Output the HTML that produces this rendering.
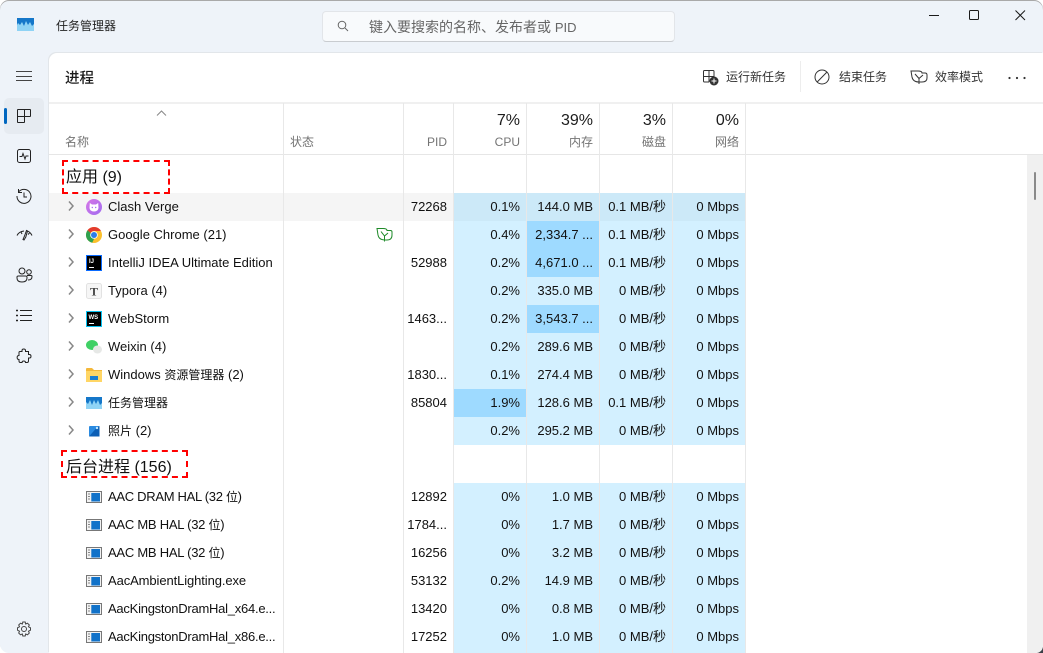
<!DOCTYPE html>
<html lang="zh-CN"><head><meta charset="utf-8"><title>任务管理器</title>
<style>
html,body{margin:0;padding:0;width:1043px;height:653px;overflow:hidden;background:#fff}
body{position:relative;font-family:"Liberation Sans","Noto Sans CJK SC",sans-serif;font-size:13px;color:#111}
div,span,svg{position:absolute;display:block}
i{font-style:normal;font-size:12px}
.t{white-space:nowrap;line-height:18px;height:18px}
.win{left:0;top:0;width:1043px;height:653px;background:#eef3f9;border-radius:9px 9px 0 9px;overflow:hidden;box-shadow:inset 0 1px 0 #a9a9a9}
.panel{left:49px;top:53px;width:994px;height:600px;background:#fff;border-radius:8px 0 0 0;box-shadow:-1px -1px 0 #e2e6ea}
.h{left:0;height:1px}
.v{width:1px;top:103px;height:550px;background:#e8e8e8}
.hp{font-size:16px;color:#1c1c1c;text-align:right;width:60px;line-height:20px;height:20px;top:111px}
.hl{font-size:12px;color:#747474;text-align:right;width:60px;top:133px}
.heat{background:#d3f0ff;width:73px}
.dark{background:#9edaff;width:73px}
.n{left:108px;margin-top:1px}
.pid{left:390px;width:57px;text-align:right;margin-top:1px}
.c1{left:460px;width:60px;text-align:right;margin-top:1px}
.c2{left:530px;width:63px;text-align:right;margin-top:1px}
.c3{left:603px;width:63px;text-align:right;margin-top:1px}
.c4{left:676px;width:63px;text-align:right;margin-top:1px}
.ic{left:86px;width:16px;height:16px}
.tb{font-size:12px;color:#333;top:68px}
.box{border:2px dashed #f00;box-sizing:border-box}
.g{font-size:16px;color:#111;line-height:22px;height:22px;white-space:nowrap}
</style></head>
<body>
<div class="win">
<div class="panel"></div>

<!-- title bar -->
<svg style="left:17px;top:18px" width="17" height="13" viewBox="0 0 17 13"><rect width="17" height="13" fill="#8fd3f5"/><path d="M0 0H17V6L15 8 13 4 11 7 9 3 7 8 5 4 3 7 1 5 0 7Z" fill="#1577c9"/></svg>
<div class="t" style="left:56px;top:17px;font-size:12px;color:#222">任务管理器</div>
<div style="left:322px;top:11px;width:351px;height:29px;background:#f8fafc;border:1px solid #e2e5e9;border-bottom-color:#c9ccd0;border-radius:4px"></div>
<svg style="left:337px;top:20px" width="12" height="12" viewBox="0 0 12 12" fill="none" stroke="#666" stroke-width="1"><circle cx="5" cy="5" r="3.8"/><path d="M8 8L11 11"/></svg>
<div class="t" style="left:369px;top:18px;color:#666;font-size:14px">键入要搜索的名称、发布者或 <i style="font-size:13px">PID</i></div>
<svg style="left:925px;top:6px" width="104" height="18" viewBox="0 0 104 18" fill="none" stroke="#1a1a1a" stroke-width="1"><path d="M4 9.500H14"/><rect x="44.500" y="4.500" width="9" height="9" rx="1"/><path d="M90.500 4.500L100 14M100 4.500L90.500 14"/></svg>

<!-- toolbar -->
<div class="t" style="left:65px;top:70px;font-size:14.500px;font-weight:500;color:#1a1a1a">进程</div>
<svg style="left:702px;top:69px" width="17" height="17" viewBox="0 0 17 17" fill="none" stroke="#333" stroke-width="1"><path d="M7 1.500H2.500Q1.500 1.500 1.500 2.500V12Q1.500 13 2.500 13H7M1.500 7.500H12V2.500Q12 1.500 11 1.500H7V13"/><circle cx="12" cy="12" r="4.500" fill="#333" stroke="none"/><path d="M12 9.500V14.500M9.500 12H14.500" stroke="#fff"/></svg>
<div class="t tb" style="left:726px">运行新任务</div>
<div style="left:800px;top:61px;width:1px;height:31px;background:#ededed"></div>
<svg style="left:814px;top:69px" width="16" height="16" viewBox="0 0 16 16" fill="none" stroke="#333" stroke-width="1"><circle cx="8" cy="8" r="7"/><path d="M3.200 13L13 3"/></svg>
<div class="t tb" style="left:839px">结束任务</div>
<svg style="left:910px;top:69px" width="18" height="16" viewBox="0 0 18 16" fill="none" stroke="#333" stroke-width="1"><path d="M1 2H8Q12 2 12 4H15Q17 4 17 6V9Q17 13 12 13H9Q3 13 2 8ZM5 5L9 9.500V15M9 9.500L13 6"/></svg>
<div class="t tb" style="left:935px">效率模式</div>
<svg style="left:1008px;top:76px" width="18" height="4" viewBox="0 0 18 4" fill="#333"><circle cx="1.500" cy="2" r="1.100"/><circle cx="9" cy="2" r="1.100"/><circle cx="16.500" cy="2" r="1.100"/></svg>

<!-- sidebar -->
<svg style="left:16px;top:70px" width="16" height="12" viewBox="0 0 16 12" stroke="#444" stroke-width="1" fill="none"><path d="M0 1.500H16M0 6.500H16M0 10.500H16"/></svg>
<div style="left:4px;top:98px;width:40px;height:36px;background:#e6ebf1;border-radius:5px"></div>
<div style="left:4px;top:108px;width:3px;height:16px;background:#0067c0;border-radius:2px"></div>
<svg style="left:16px;top:108px" width="16" height="16" viewBox="0 0 16 16" fill="none" stroke="#222" stroke-width="1"><path d="M8.500 8.500V1.500H14Q14.500 1.500 14.500 2V8Q14.500 8.500 14 8.500H1.500M8.500 1.500H2Q1.500 1.500 1.500 2V14Q1.500 14.500 2 14.500H8Q8.500 14.500 8.500 14V8.500"/></svg>
<svg style="left:16px;top:148px" width="16" height="16" viewBox="0 0 16 16" fill="none" stroke="#222" stroke-width="1"><rect x="1.500" y="1.500" width="13" height="13" rx="2"/><path d="M3.500 8.500H6L7 5.500 9 11 10 8H12.500"/></svg>
<svg style="left:16px;top:188px" width="16" height="16" viewBox="0 0 16 16" fill="none" stroke="#222" stroke-width="1"><path d="M2.500 4A7 7 0 1 1 1 8M2.500 1V4.500H6M8 4.500V9H11"/></svg>
<svg style="left:16px;top:227px" width="17" height="16" viewBox="0 0 17 16" fill="none" stroke="#222" stroke-width="1"><path d="M1 8.500Q3 4.500 8 4M11 4Q14 4.500 16 8.500M5 5L6 7M13.500 6L12 7.500"/><path d="M10.500 3.500L8.500 9 7 12.500 8 13 9.800 10 11.500 4Z"/></svg>
<svg style="left:16px;top:267px" width="17" height="16" viewBox="0 0 17 16" fill="none" stroke="#222" stroke-width="1"><circle cx="6" cy="4" r="3"/><circle cx="13" cy="5" r="2.300"/><path d="M1 10Q1 9 2.500 9H9.500Q11 9 11 10V11Q11 15 6 15 1 15 1 11ZM11 8.500H15Q16 8.500 16 9.500 16 13 12 13"/></svg>
<svg style="left:16px;top:308px" width="16" height="14" viewBox="0 0 16 14" fill="none" stroke="#222" stroke-width="1"><path d="M4 2.500H16M4 7.500H16M4 12.500H16"/><path d="M0 2.500H2M0 7.500H2M0 12.500H2" stroke-width="1.500"/></svg>
<svg style="left:16px;top:348px" width="16" height="16" viewBox="0 0 16 16" fill="none" stroke="#222" stroke-width="1"><path d="M6 2.500C6 .5 9.500 .5 9.500 2.500V3.500H12.500V6.500H13.500C15.500 6.500 15.500 10 13.500 10H12.500V13Q12.500 14.500 11 14.500H9.500C9.500 12.500 6 12.500 6 14.500H4.500Q3 14.500 3 13V11.500C.5 11.500 .5 7.500 3 7.500V4.500Q3 3.500 4 3.500H6Z"/></svg>
<svg style="left:16px;top:621px" width="16" height="16" viewBox="0 0 16 16" fill="none" stroke="#444" stroke-width="1"><circle cx="8" cy="8" r="2.500"/><path d="M6.800 1H9.200L9.700 3 11.500 2.200 13.300 4 12.500 5.800 14.500 6.800V9.200L12.500 10.200 13.300 12 11.500 13.800 9.700 13 9.200 15H6.800L6.300 13 4.500 13.800 2.700 12 3.500 10.200 1.500 9.200V6.800L3.500 5.800 2.700 4 4.500 2.200 6.300 3Z"/></svg>

<!-- table rules -->
<div class="h" style="left:49px;top:102px;width:994px;height:2px;background:#f0f0f0"></div>
<div class="h" style="left:49px;top:154px;width:994px;background:#e6e6e6"></div>
<div style="left:1027px;top:155px;width:16px;height:498px;background:#f0f0f0"></div>
<div style="left:1034px;top:172px;width:2px;height:28px;background:#8a8a8a;border-radius:1px"></div>
<svg style="left:1037px;top:647px" width="6" height="6" viewBox="0 0 6 6"><path d="M6 0V6H0Q5 5 6 0Z" fill="#3a3f46"/></svg>

<!-- heat backgrounds -->
<div style="left:49px;top:193px;width:404px;height:28px;background:#f5f5f5"></div>
<div class="heat" style="left:454px;top:193px;width:292px;height:252px"></div>
<div class="heat" style="left:454px;top:483px;width:292px;height:170px"></div>
<div style="left:454px;top:193px;width:292px;height:28px;background:#cce9f8"></div>
<div class="dark" style="left:527px;top:221px;height:56px"></div>
<div class="dark" style="left:527px;top:305px;height:28px"></div>
<div class="dark" style="left:454px;top:389px;height:28px"></div>

<div style="left:454px;top:155px;width:292px;height:38px;background:#fff"></div>
<div style="left:454px;top:445px;width:292px;height:38px;background:#fff"></div>
<div class="v" style="left:283px"></div><div class="v" style="left:403px"></div><div class="v" style="left:453px"></div><div class="v" style="left:526px"></div><div class="v" style="left:599px"></div><div class="v" style="left:672px"></div><div class="v" style="left:745px"></div>

<!-- header -->
<svg style="left:156px;top:110px" width="11" height="6" viewBox="0 0 11 6" fill="none" stroke="#888" stroke-width="1"><path d="M1 5.500L5.500 1 10 5.500"/></svg>
<div class="t" style="left:65px;top:133px;font-size:12px;color:#747474">名称</div>
<div class="t" style="left:290px;top:133px;font-size:12px;color:#747474">状态</div>
<div class="t hl" style="left:387px">PID</div>
<div class="t hp" style="left:460px">7%</div><div class="t hl" style="left:460px">CPU</div>
<div class="t hp" style="left:533px">39%</div><div class="t hl" style="left:533px">内存</div>
<div class="t hp" style="left:606px">3%</div><div class="t hl" style="left:606px">磁盘</div>
<div class="t hp" style="left:679px">0%</div><div class="t hl" style="left:679px">网络</div>

<!-- groups -->
<div class="box" style="left:62px;top:160px;width:108px;height:34px"></div>
<div class="g" style="left:66px;top:167px">应用 (9)</div>
<div class="box" style="left:61px;top:450px;width:127px;height:28px"></div>
<div class="g" style="left:66px;top:457px">后台进程 (156)</div>

<!-- chevrons -->
<svg style="left:68px;top:201px" width="6" height="240" viewBox="0 0 6 240" fill="none" stroke="#888" stroke-width="1.500"><path d="M1 0.500L5 5 1 9.500M1 28.500L5 33 1 37.500M1 56.500L5 61 1 65.500M1 84.500L5 89 1 93.500M1 112.500L5 117 1 121.500M1 140.500L5 145 1 149.500M1 168.500L5 173 1 177.500M1 196.500L5 201 1 205.500M1 224.500L5 229 1 233.500"/></svg>

<!-- app icons -->
<svg class="ic" style="top:199px" viewBox="0 0 16 16"><defs><linearGradient id="cv" x1="0" y1="0" x2="1" y2="1"><stop offset="0" stop-color="#d877e6"/><stop offset="1" stop-color="#a06cf0"/></linearGradient></defs><circle cx="8" cy="8" r="8" fill="url(#cv)"/><path d="M3.800 4L6 5.500H10L12.200 4 12.500 9Q12 12.500 8 12.500 4 12.500 3.500 9Z" fill="#fff"/><circle cx="6.300" cy="8.500" r=".7" fill="#a06cf0"/><circle cx="9.700" cy="8.500" r=".7" fill="#a06cf0"/></svg>
<svg class="ic" style="top:227px" viewBox="0 0 16 16"><circle cx="8" cy="8" r="8" fill="#fbc02d"/><path d="M8 0A8 8 0 0 1 15 4H8A4 4 0 0 0 4.500 6L1.500 3.300A8 8 0 0 1 8 0Z" fill="#e33b2e"/><path d="M1.500 3.300L4.500 6 8 12 6.200 15.800A8 8 0 0 1 1.500 3.300Z" fill="#2fa14f"/><circle cx="8" cy="8" r="3.800" fill="#fff"/><circle cx="8" cy="8" r="3" fill="#2a7de9"/></svg>
<svg class="ic" style="top:255px" viewBox="0 0 16 16"><rect width="16" height="16" fill="#0a6bff"/><rect x="1" y="1" width="14" height="14" fill="#000"/><path d="M3 12.500H8" stroke="#fff" stroke-width="1"/><text x="3" y="8" font-size="6" font-family="Liberation Sans" font-weight="700" fill="#fff">IJ</text></svg>
<svg class="ic" style="top:283px" viewBox="0 0 16 16"><rect x=".5" y=".5" width="15" height="15" rx="2" fill="#f6f6f6" stroke="#e2e2e2"/><text x="8" y="12.500" text-anchor="middle" font-size="12" font-weight="700" font-family="Liberation Serif" fill="#444">T</text></svg>
<svg class="ic" style="top:311px" viewBox="0 0 16 16"><rect width="16" height="16" fill="#07c3f2"/><rect x="1" y="1" width="14" height="14" fill="#000"/><path d="M3 12.500H8" stroke="#fff" stroke-width="1"/><text x="2.500" y="8" font-size="6" font-family="Liberation Sans" font-weight="700" fill="#fff">WS</text></svg>
<svg class="ic" style="top:339px" viewBox="0 0 16 16"><ellipse cx="6" cy="6" rx="6" ry="5" fill="#3fd065"/><ellipse cx="11.500" cy="10.500" rx="4.500" ry="4" fill="#e6e8e6"/></svg>
<svg class="ic" style="top:367px" viewBox="0 0 16 16"><path d="M0 2Q0 1 1 1H6L8 3H16V15H0Z" fill="#f4b83a"/><rect y="4" width="16" height="11" fill="#ffd665"/><rect x="4" y="9" width="8" height="4" fill="#1b7fd1"/></svg>
<svg class="ic" style="top:397px;height:12px" viewBox="0 0 16 12" preserveAspectRatio="none"><rect width="16" height="12" fill="#8fd3f5"/><path d="M0 0H16V6L14 8 12 3 10 7 8 3 6 8 4 3 2 7 0 5Z" fill="#1577c9"/></svg>
<svg class="ic" style="top:423px" viewBox="0 0 16 16"><rect x="3" y="3" width="10.500" height="10.500" rx="1" fill="#2a8ae0"/><path d="M3 13.500L10 5.500 13.500 3V13.500Z" fill="#0d5fb5"/><circle cx="11" cy="5" r="1.200" fill="#bfe8ff"/></svg>
<svg style="left:376px;top:227px" width="17" height="15" viewBox="0 0 17 15" fill="none" stroke="#1e8a28" stroke-width="1"><path d="M1 1.500H7Q11 1.500 11 3.500H14.500Q16 3.500 16 5V8Q16 13 11 13H9Q3 13 2 8ZM5 4.500L8.500 9V14.500M8.500 9L12 6"/></svg>

<!-- generic exe icons -->
<svg style="width:0;height:0"><defs><g id="e"><rect x=".5" y="2.500" width="15" height="11" fill="#f2f2f2" stroke="#777"/><rect x="5.300" y="4" width="8.700" height="8.500" fill="#1172c9"/><path d="M2 5H4M2 7.500H4M2 10H4" stroke="#888"/></g></defs></svg>
<svg class="ic" style="top:489px" viewBox="0 0 16 16"><use href="#e"/></svg>
<svg class="ic" style="top:517px" viewBox="0 0 16 16"><use href="#e"/></svg>
<svg class="ic" style="top:545px" viewBox="0 0 16 16"><use href="#e"/></svg>
<svg class="ic" style="top:573px" viewBox="0 0 16 16"><use href="#e"/></svg>
<svg class="ic" style="top:601px" viewBox="0 0 16 16"><use href="#e"/></svg>
<svg class="ic" style="top:629px" viewBox="0 0 16 16"><use href="#e"/></svg>

<!-- rows -->
<div class="t n" style="top:197px">Clash Verge</div><div class="t pid" style="top:197px">72268</div><div class="t c1" style="top:197px">0.1%</div><div class="t c2" style="top:197px">144.0 MB</div><div class="t c3" style="top:197px">0.1 MB/秒</div><div class="t c4" style="top:197px">0 Mbps</div>
<div class="t n" style="top:225px">Google Chrome (21)</div><div class="t c1" style="top:225px">0.4%</div><div class="t c2" style="top:225px">2,334.7 ...</div><div class="t c3" style="top:225px">0.1 MB/秒</div><div class="t c4" style="top:225px">0 Mbps</div>
<div class="t n" style="top:253px">IntelliJ IDEA Ultimate Edition</div><div class="t pid" style="top:253px">52988</div><div class="t c1" style="top:253px">0.2%</div><div class="t c2" style="top:253px">4,671.0 ...</div><div class="t c3" style="top:253px">0.1 MB/秒</div><div class="t c4" style="top:253px">0 Mbps</div>
<div class="t n" style="top:281px">Typora (4)</div><div class="t c1" style="top:281px">0.2%</div><div class="t c2" style="top:281px">335.0 MB</div><div class="t c3" style="top:281px">0 MB/秒</div><div class="t c4" style="top:281px">0 Mbps</div>
<div class="t n" style="top:309px">WebStorm</div><div class="t pid" style="top:309px">1463...</div><div class="t c1" style="top:309px">0.2%</div><div class="t c2" style="top:309px">3,543.7 ...</div><div class="t c3" style="top:309px">0 MB/秒</div><div class="t c4" style="top:309px">0 Mbps</div>
<div class="t n" style="top:337px">Weixin (4)</div><div class="t c1" style="top:337px">0.2%</div><div class="t c2" style="top:337px">289.6 MB</div><div class="t c3" style="top:337px">0 MB/秒</div><div class="t c4" style="top:337px">0 Mbps</div>
<div class="t n" style="top:365px">Windows <i>资源管理器</i> (2)</div><div class="t pid" style="top:365px">1830...</div><div class="t c1" style="top:365px">0.1%</div><div class="t c2" style="top:365px">274.4 MB</div><div class="t c3" style="top:365px">0 MB/秒</div><div class="t c4" style="top:365px">0 Mbps</div>
<div class="t n" style="top:393px"><i>任务管理器</i></div><div class="t pid" style="top:393px">85804</div><div class="t c1" style="top:393px">1.9%</div><div class="t c2" style="top:393px">128.6 MB</div><div class="t c3" style="top:393px">0.1 MB/秒</div><div class="t c4" style="top:393px">0 Mbps</div>
<div class="t n" style="top:421px"><i>照片</i> (2)</div><div class="t c1" style="top:421px">0.2%</div><div class="t c2" style="top:421px">295.2 MB</div><div class="t c3" style="top:421px">0 MB/秒</div><div class="t c4" style="top:421px">0 Mbps</div>

<div class="t n" style="top:487px;letter-spacing:-.3px">AAC DRAM HAL (32 <i>位</i>)</div><div class="t pid" style="top:487px">12892</div><div class="t c1" style="top:487px">0%</div><div class="t c2" style="top:487px">1.0 MB</div><div class="t c3" style="top:487px">0 MB/秒</div><div class="t c4" style="top:487px">0 Mbps</div>
<div class="t n" style="top:515px;letter-spacing:-.25px">AAC MB HAL (32 <i>位</i>)</div><div class="t pid" style="top:515px">1784...</div><div class="t c1" style="top:515px">0%</div><div class="t c2" style="top:515px">1.7 MB</div><div class="t c3" style="top:515px">0 MB/秒</div><div class="t c4" style="top:515px">0 Mbps</div>
<div class="t n" style="top:543px;letter-spacing:-.25px">AAC MB HAL (32 <i>位</i>)</div><div class="t pid" style="top:543px">16256</div><div class="t c1" style="top:543px">0%</div><div class="t c2" style="top:543px">3.2 MB</div><div class="t c3" style="top:543px">0 MB/秒</div><div class="t c4" style="top:543px">0 Mbps</div>
<div class="t n" style="top:571px;letter-spacing:-.1px">AacAmbientLighting.exe</div><div class="t pid" style="top:571px">53132</div><div class="t c1" style="top:571px">0.2%</div><div class="t c2" style="top:571px">14.9 MB</div><div class="t c3" style="top:571px">0 MB/秒</div><div class="t c4" style="top:571px">0 Mbps</div>
<div class="t n" style="top:599px;letter-spacing:-.25px">AacKingstonDramHal_x64.e...</div><div class="t pid" style="top:599px">13420</div><div class="t c1" style="top:599px">0%</div><div class="t c2" style="top:599px">0.8 MB</div><div class="t c3" style="top:599px">0 MB/秒</div><div class="t c4" style="top:599px">0 Mbps</div>
<div class="t n" style="top:627px;letter-spacing:-.25px">AacKingstonDramHal_x86.e...</div><div class="t pid" style="top:627px">17252</div><div class="t c1" style="top:627px">0%</div><div class="t c2" style="top:627px">1.0 MB</div><div class="t c3" style="top:627px">0 MB/秒</div><div class="t c4" style="top:627px">0 Mbps</div>
</div>
</body></html>
